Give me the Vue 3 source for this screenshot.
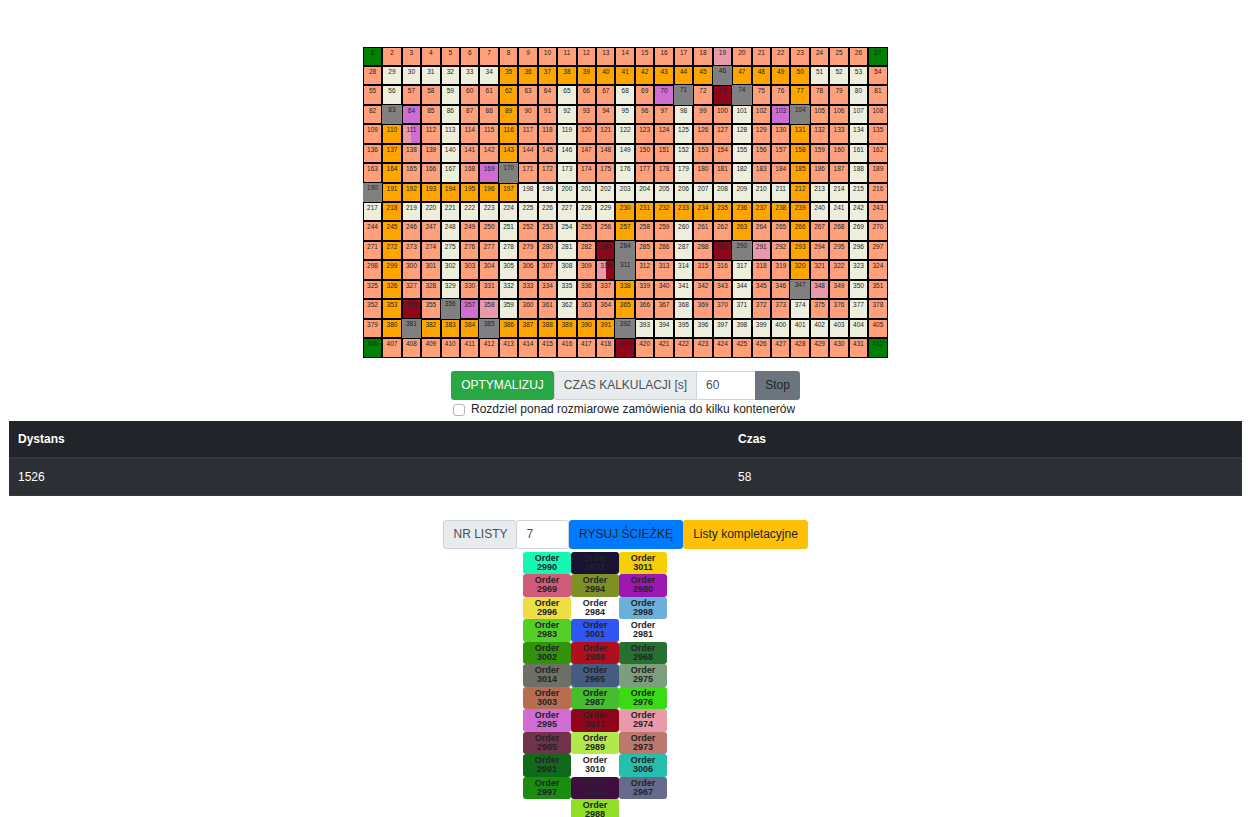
<script setup>
import { ref } from 'vue'

const kinds = {
  s: 'shelf', i: 'aisle', o: 'path', g: 'pick', G: 'corner',
  v: 'violet', p: 'pink', r: 'crimson', x: 'pink-violet', y: 'pink-crimson',
}

const rows = [
  'GssssssssssssssssspsssssssG',
  'siiiiiiooooooooooogooooiiis',
  'sissississ'.slice(0, 7) + 'oss' + 'issi' + 'svg' + 'srg' + 'sso' + 'ssis',
  'sgvsiss' + 'oss' + 'issi' + 'ssi' + 'ssi' + 'svg' + 'ssis',
  'soxsiss' + 'oss' + 'issi' + 'ssi' + 'ssi' + 'sso' + 'ssis',
  'sossiss' + 'oss' + 'issi' + 'ssi' + 'ssi' + 'sso' + 'ssis',
  'sossisv' + 'gss' + 'issi' + 'ssi' + 'ssi' + 'sso' + 'ssis',
  'goooooooiiiiiiiiiiiiiioiiis',
  'ioiiiiiiiiiiiooooooooooiiis',
  'sossiss' + 'iss' + 'isso' + 'ssi' + 'sso' + 'sso' + 'ssis',
  'sossiss' + 'iss' + 'isrg' + 'ssi' + 'srg' + 'pso' + 'ssis',
  'sossiss' + 'iss' + 'isyg' + 'ssi' + 'ssi' + 'sso' + 'ssis',
  'sossiss' + 'iss' + 'isso' + 'ssi' + 'ssi' + 'ssg' + 'psis',
  'sorsgvp' + 'iss' + 'isso' + 'ssi' + 'ssi' + 'ssi' + 'ssis',
  'sogooog' + 'ooo' + 'ooog' + 'iii' + 'iii' + 'iii' + 'iiis',
  'Gssssss' + 'sss' + 'sssr' + 'sss' + 'sss' + 'sss' + 'sssG',
]

const cells = rows.join('').split('').map((k, n) => ({ id: n + 1, kind: kinds[k] }))

const orders = [
  [2990, '#14f7b5'], [2971, '#191233'], [3011, '#f4cf05'],
  [2969, '#cf5b78'], [2994, '#7f9125'], [2980, '#9d17b2'],
  [2996, '#eedd45'], [2984, '#ffffff'], [2998, '#6bb0d9'],
  [2983, '#55cf28'], [3001, '#3057f5'], [2981, '#ffffff'],
  [3002, '#32930a'], [2986, '#b0101e'], [2968, '#27702f'],
  [3014, '#6c7065'], [2965, '#465b82'], [2975, '#7b9f7c'],
  [3003, '#b66d50'], [2987, '#45bd2c'], [2976, '#3ada14'],
  [2995, '#d06dd3'], [2977, '#8f051a'], [2974, '#e99aaa'],
  [2985, '#71334c'], [2989, '#b1e94a'], [2973, '#bc786d'],
  [2991, '#116a19'], [3010, '#ffffff'], [3006, '#26beac'],
  [2997, '#1a8d10'], [2993, '#400e3e'], [2967, '#666b8e'],
  null, [2988, '#8edf25'], null,
]

const seconds = ref('60')
const list = ref('7')
const split = ref(false)
</script>

<template>
  <main class="page">
    <div class="warehouse">
      <div v-for="c in cells" :key="c.id" class="cell" :class="c.kind">{{ c.id }}</div>
    </div>

    <div class="group calc">
      <button class="btn success">OPTYMALIZUJ</button>
      <span class="addon time-label">CZAS KALKULACJI [s]</span>
      <input v-model="seconds" class="field seconds" type="text">
      <button class="btn secondary">Stop</button>
    </div>

    <label class="check">
      <input v-model="split" type="checkbox">
      <span>Rozdziel ponad rozmiarowe zamówienia do kilku kontenerów</span>
    </label>

    <table class="results">
      <thead>
        <tr><th>Dystans</th><th>Czas</th></tr>
      </thead>
      <tbody>
        <tr><td>1526</td><td>58</td></tr>
      </tbody>
    </table>

    <div class="group lists">
      <span class="addon list-label">NR LISTY</span>
      <input v-model="list" class="field number" type="text">
      <button class="btn primary">RYSUJ ŚCIEŻKĘ</button>
      <button class="btn warning">Listy kompletacyjne</button>
    </div>

    <div class="orders">
      <template v-for="(o, n) in orders" :key="n">
        <button v-if="o" class="order" :style="{ backgroundColor: o[1] }">Order<br>{{ o[0] }}</button>
        <span v-else></span>
      </template>
    </div>
  </main>
</template>

<style>
body { background: #fff; overflow: hidden; }
</style>

<style scoped>
* { box-sizing: border-box; }
.page {
  height: 817px;
  overflow: hidden;
  padding-top: 46.5px;
  font: 12px/18px "Liberation Sans", Arial, sans-serif;
  color: #212529;
}
button, input { font: inherit; margin: 0; }
.warehouse {
  display: grid;
  grid-template-columns: repeat(27, 19.45px);
  grid-auto-rows: 19.45px;
  width: 525.15px;
  height: 311.2px;
  margin-left: 362.8px;
}
.cell {
  border: 1px solid #000;
  font-size: 6.5px;
  line-height: 9.75px;
  text-align: center;
  white-space: nowrap;
  overflow: hidden;
}
.shelf { background: #ffa07a; }
.aisle { background: #eeeedd; }
.path { background: #ffa500; }
.pick { background: #808080; border: 0; }
.corner { background: #008000; }
.violet { background: #d06dd3; }
.pink { background: #e99aaa; }
.crimson { background: #8f051a; }
.pink-violet { background: linear-gradient(90deg, #e99aaa 50%, #d06dd3 50%); }
.pink-crimson { background: linear-gradient(90deg, #e99aaa 50%, #8f051a 50%); }

.group { display: flex; height: 29px; }
.calc { margin: 13.3px 0 0 451px; }
.lists { margin: 24px 0 0 443px; }
.btn {
  border: 0;
  border-radius: 3px;
  padding: 0;
  text-align: center;
  color: #212529;
  white-space: nowrap;
}
.success { width: 103px; background: #28a745; color: #fff; }
.secondary { width: 45px; background: #6c757d; border-radius: 0 3px 3px 0; }
.primary { width: 114px; background: #007bff; }
.warning { width: 125px; background: #ffc107; }
.addon {
  border: 1px solid #ced4da;
  border-radius: 3px 0 0 3px;
  background: #e9ecef;
  color: #495057;
  line-height: 27px;
  text-align: center;
  white-space: nowrap;
}
.time-label { width: 143px; }
.list-label { width: 74px; padding-left: 1px; border-radius: 3px; }
.field {
  border: 1px solid #ced4da;
  border-left: 0;
  border-radius: 0;
  padding: 0 9px;
  background: #fff;
  color: #495057;
  outline: none;
}
.seconds { width: 58px; border-right: 0; }
.number { width: 53px; margin-left: -1px; padding-left: 9.5px; border-left: 1px solid #ced4da; border-radius: 3px; }

.check { display: flex; height: 18px; margin-left: 453px; white-space: nowrap; }
.check input {
  appearance: none;
  width: 12px;
  height: 12px;
  margin: 4px 6px 0 0;
  border: 1px solid #b5b5b5;
  border-radius: 3px;
  background: #fff;
}

.results {
  width: 1233px;
  margin: 3px 0 0 9px;
  table-layout: fixed;
  border-collapse: separate;
  border-spacing: 0;
  color: #fff;
}
.results th, .results td { padding: 0 9px; text-align: left; }
.results th:first-child { width: 720px; }
.results th { height: 38px; background: #212529; border-bottom: 2px solid #32383e; }
.results td { height: 37px; background: #2c3034; border-bottom: 1px solid #32383e; }

.orders {
  display: grid;
  grid-template-columns: repeat(3, 48px);
  grid-auto-rows: 22.5px;
  margin: 3px 0 0 523px;
}
.order {
  border: 0;
  border-radius: 3px;
  padding: 0 0 1px;
  color: #212529;
  font-size: 9px;
  font-weight: bold;
  line-height: 9px;
  text-align: center;
}
</style>
